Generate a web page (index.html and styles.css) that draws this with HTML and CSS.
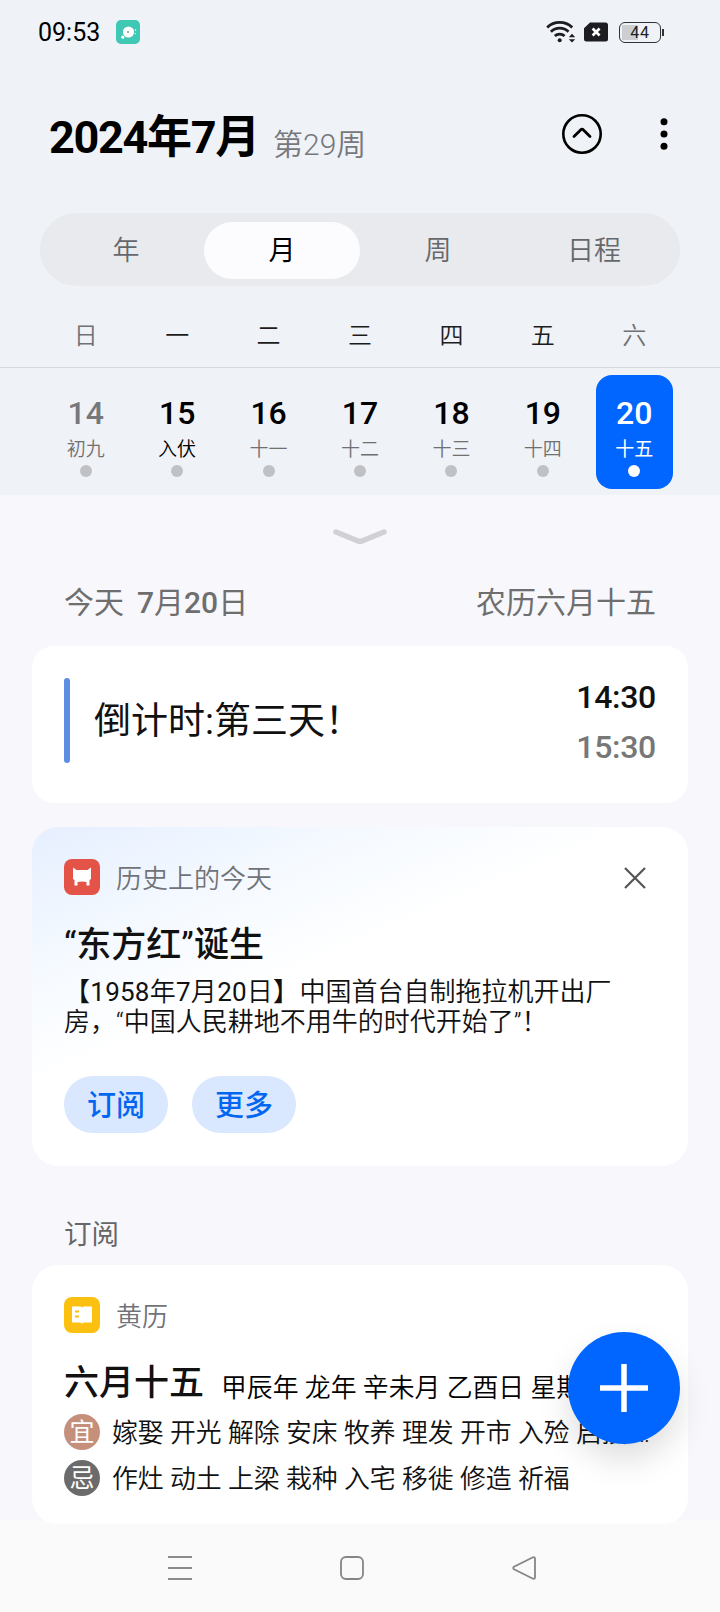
FILE: index.html
```html
<!DOCTYPE html>
<html lang="zh-CN">
<head>
<meta charset="utf-8">
<title>日历</title>
<link rel="stylesheet" href="styles.css">
</head>
<body>
<div class="screen">
  <header class="top">
    <div class="status">
      <span class="clock">09:53</span>
      <svg class="status-app" width="24" height="24" viewBox="0 0 24 24"><rect width="24" height="24" rx="5" fill="#3fc8b4"/><circle cx="12.5" cy="12" r="5.600" fill="#fff"/><circle cx="6.800" cy="17.200" r="1.600" fill="#fff"/><circle cx="19.500" cy="10" r=".8" fill="#fff"/><circle cx="19.300" cy="13.600" r=".6" fill="#fff"/><circle cx="12" cy="12" r="1.100" fill="#8aa9a0"/></svg>
      <div class="status-right">
        <svg width="30" height="24" viewBox="0 0 30 24" fill="none" stroke="#1d1c22" stroke-width="2.800"><path d="M1.200 7.400a18 18 0 0 1 25 0"/><path d="M4.900 11.800a12.600 12.600 0 0 1 17.600 0"/><path d="M8.800 16a7.200 7.200 0 0 1 9.800 0"/><circle cx="13.700" cy="20.200" r="2" fill="#1d1c22" stroke="none"/><path d="M22.800 17.200l3.200-3.400 3.200 3.400zM22.800 19.200l3.200 3.400 3.200-3.400z" fill="#1d1c22" stroke="none"/></svg>
        <svg class="sim" width="24" height="20" viewBox="0 0 24 20"><path d="M6 .5H21.500a2.500 2.500 0 0 1 2.500 2.500V17a2.500 2.500 0 0 1-2.500 2.500H2.500A2.500 2.500 0 0 1 0 17V6.200z" fill="#1d1c22"/><path d="M8.600 6.500l7 7M15.600 6.500l-7 7" stroke="#fff" stroke-width="2.600"/></svg>
        <div class="battery"><span>44</span></div><i class="battery-tip"></i>
      </div>
    </div>
    <div class="title-row">
      <h1>2024年7月</h1><span class="week">第29周</span>
      <svg class="collapse" width="40" height="40" viewBox="0 0 40 40" fill="none" stroke="#000"><circle cx="20" cy="20" r="18.700" stroke-width="2.600"/><path d="M12 22.500l6.800-6.800q1.200-1 2.400 0l6.800 6.800" stroke-width="2.800" stroke-linecap="round"/></svg>
      <svg class="more" width="8" height="32" viewBox="0 0 8 32"><circle cx="4" cy="3.800" r="3.500"/><circle cx="4" cy="16" r="3.500"/><circle cx="4" cy="28.200" r="3.500"/></svg>
    </div>
    <nav class="tabs"><span>年</span><span class="on">月</span><span>周</span><span>日程</span></nav>
    <div class="weekdays"><span class="dim">日</span><span>一</span><span>二</span><span>三</span><span>四</span><span>五</span><span class="dim">六</span></div>
    <div class="days">
      <div class="day dim"><b>14</b><span>初九</span><i></i></div>
      <div class="day term"><b>15</b><span>入伏</span><i></i></div>
      <div class="day"><b>16</b><span>十一</span><i></i></div>
      <div class="day"><b>17</b><span>十二</span><i></i></div>
      <div class="day"><b>18</b><span>十三</span><i></i></div>
      <div class="day"><b>19</b><span>十四</span><i></i></div>
      <div class="day sel"><b>20</b><span>十五</span><i></i></div>
    </div>
  </header>

  <main class="content">
    <svg class="handle" width="56" height="51" viewBox="0 0 56 51"><path d="M4 37L26 46q2 .7 4 0L52 37" fill="none" stroke="#d0d0d5" stroke-width="5.500" stroke-linecap="round"/></svg>
    <div class="date-row"><span>今天</span><span><b>7</b>月<b>20</b>日</span><span class="lunar">农历六月十五</span></div>

    <section class="card event">
      <i class="bar"></i>
      <h2>倒计时:第三天！</h2>
      <div class="times"><span>14:30</span><span class="end">15:30</span></div>
    </section>

    <section class="card history">
      <div class="card-head">
        <svg width="36" height="36" viewBox="0 0 36 36"><rect width="36" height="36" rx="8" fill="#e45348"/><path d="M9 8.500l3.500 2.500h11L27 8.500v11.500l-1.500 1v5.500h-3V23q-4.500-1.200-9 0v3.500h-3V21L9 20z" fill="#fff"/></svg>
        <span>历史上的今天</span>
        <svg class="close" width="24" height="24" viewBox="0 0 24 24"><path d="M2 3l20 20M22 3L2 23" stroke="#555" stroke-width="2.200"/></svg>
      </div>
      <h2>“东方红”诞生</h2>
      <p><span class="stamp">【<b>1958</b>年<b>7</b>月<b>20</b>日】</span>中国首台自制拖拉机开出厂<br>房，“中国人民耕地不用牛的时代开始了”！</p>
      <div class="buttons"><span>订阅</span><span>更多</span></div>
    </section>

    <div class="section-title">订阅</div>

    <section class="card almanac">
      <div class="card-head">
        <svg width="36" height="36" viewBox="0 0 36 36"><rect width="36" height="36" rx="8" fill="#fcc011"/><path d="M8 9.500h7.500q1.800 0 2.500.9.700-.9 2.500-.9H28v16h-7q-2 0-3 1-1-1-3-1H8z" fill="#fff"/><path d="M11 14.500h4M11 19.500h4" stroke="#fcc011" stroke-width="2"/></svg>
        <span>黄历</span>
      </div>
      <div class="lunar-row"><h2>六月十五</h2><span>甲辰年 龙年 辛未月 乙酉日 星期六</span></div>
      <div class="advice"><i class="good">宜</i><span>嫁娶 开光 解除 安床 牧养 理发 开市 入殓 启攒</span><span class="dots">…</span></div>
      <div class="advice"><i class="bad">忌</i><span>作灶 动土 上梁 栽种 入宅 移徙 修造 祈福</span></div>
    </section>
  </main>

  <div class="fab"><svg width="48" height="48" viewBox="0 0 48 48"><path d="M24 0v48M0 24h48" stroke="#fff" stroke-width="5.500"/></svg></div>

  <footer class="navbar">
    <svg width="24" height="26" viewBox="0 0 24 26"><path d="M0 2h24M0 13h24M0 24h24" stroke="#8b8b8b" stroke-width="2"/></svg>
    <svg width="24" height="26" viewBox="0 0 24 26"><rect x="1" y="2" width="22" height="22" rx="5" fill="none" stroke="#858585" stroke-width="1.800"/></svg>
    <svg width="24" height="26" viewBox="0 0 24 26"><path d="M21 2.300L2 11.800q-1.600 1.200 0 2.400l19 9.500q2 .5 2-1.500V3.800q0-2-2-1.500z" fill="none" stroke="#858585" stroke-width="1.800"/></svg>
  </footer>
</div>
</body>
</html>
```
FILE: styles.css
```css
* { box-sizing: border-box; margin: 0; padding: 0; }
body {
  width: 720px;
  background: #f7f7fc;
  font-family: Roboto, "Noto Sans CJK SC", sans-serif;
  color: #111;
  text-spacing-trim: space-all;
  font-weight: 400;
}
i { font-style: normal; display: block; }
svg { display: block; flex: none; }
.screen { position: relative; width: 720px; height: 1612px; overflow: hidden; }

.top { height: 495px; background: #eff2f6; }
.status { display: flex; height: 64px; padding: 0 55px 0 38px; align-items: center; }
.clock { font-size: 25px; line-height: 28px; width: 78px; padding-top: 2px; color: #000; }
.status-right { display: flex; align-items: center; margin-left: auto; }
.sim { margin: 0 11px 0 8px; }
.battery {
  width: 42px; height: 21px; border: 1.5px solid #333; border-radius: 6px;
  background: linear-gradient(90deg, #ccced1 0 16px, transparent 16px) 2px 2px / 36px 15px no-repeat;
  text-align: center; font-size: 16px; line-height: 19px; color: #222; letter-spacing: .8px;
}
.battery-tip { width: 2px; height: 7px; background: #333; margin: 0 1px; }

.title-row { display: flex; height: 149px; padding: 46px 52px 0 49px; }
h1 { font-size: 45px; line-height: 56px; font-weight: 700; color: #000; letter-spacing: -1.3px; }
.week { font-size: 30px; line-height: 40px; padding-top: 15px; margin-left: 14px; color: #77787c; font-weight: 350; }
.collapse { margin: 4px 0 0 auto; }
.more { margin: 8px 0 0 58px; }

.tabs { display: flex; margin: 0 40px; height: 73px; padding: 9px 8px 7px; background: #e8eaed; border-radius: 37px; }
.tabs span { flex: 1; font-size: 27px; line-height: 59px; height: 57px; text-align: center; color: #66676b; font-weight: 350; border-radius: 29px; }
.tabs .on { background: #fcfcfe; color: #000; font-weight: 400; }

.weekdays { display: grid; grid-template-columns: repeat(7, 1fr); height: 82px; padding: 33px 40px 0; border-bottom: 1.5px solid #d5d8dc; }
.weekdays span { font-size: 24px; line-height: 34px; text-align: center; font-weight: 350; color: #1c1c20; }
.weekdays .dim { color: #707175; }

.days { display: grid; grid-template-columns: repeat(7, 1fr); padding: 7px 40px 0; }
.day { display: flex; flex-direction: column; align-items: center; height: 114px; width: 77px; margin: 0 auto; padding-top: 20px; border-radius: 16px; color: #000; }
.day b { font-size: 32px; line-height: 36px; font-weight: 500; }
.day span { font-size: 19px; line-height: 26px; margin-top: 6px; color: #6f7074; font-weight: 350; }
.day i { width: 12px; height: 12px; border-radius: 6px; background: #bfc1c4; margin-top: 2px; }
.day.dim b { color: #77787c; }
.day.term span { color: #000; }
.day.sel { background: #0066ff; color: #fff; }
.day.sel span { color: #fff; font-weight: 400; }
.day.sel i { background: #fff; }

.content { position: relative; z-index: 1; height: 1025px; }
.handle { margin: 0 auto; }
.date-row { display: flex; padding: 37px 64px 0; font-size: 30px; line-height: 40px; color: #6e6e6e; font-weight: 400; height: 100px; }
.date-row b { font-weight: 500; }
.date-row span + span { margin-left: 13px; }
.date-row .lunar { margin-left: auto; }

.card { margin: 0 32px; background: #fff; border-radius: 26px; }
h2 { font-weight: 450; }
.event { display: flex; height: 157px; padding: 32px 32px 0; border-radius: 22px; }
.bar { width: 6px; height: 85px; border-radius: 3px; background: #5c8ee2; }
.event h2 { font-size: 37px; line-height: 50px; margin: 19px 0 0 24px; font-weight: 400; }
.times { margin-left: auto; display: flex; flex-direction: column; font-size: 32px; line-height: 50px; font-weight: 500; margin-top: -6px; letter-spacing: -.3px; }
.times .end { color: #777; }

.history {
  margin-top: 24px; height: 339px; padding: 32px;
  background: linear-gradient(157deg, #e6efff 0, #f4f9ff 22%, #fff 42%);
}
.card-head { display: flex; align-items: center; height: 36px; font-size: 26px; color: #717378; font-weight: 350; }
.card-head span { margin-left: 16px; line-height: 36px; padding-top: 4px; }
.close { margin-left: auto; margin-right: 9px; }
.history h2 { font-size: 35px; line-height: 48px; margin-top: 27px; }
.history p { font-size: 26px; line-height: 30px; margin-top: 7px; font-weight: 350; white-space: nowrap; }
.stamp { letter-spacing: .25px; }
.stamp b { font-weight: 400; }
.buttons { display: flex; gap: 24px; margin-top: 39px; }
.buttons span { width: 104px; height: 57px; border-radius: 29px; background: #d9e7ff; color: #0366f0; font-size: 29px; line-height: 61px; text-align: center; font-weight: 450; }

.section-title { padding: 49px 64px 0; height: 99px; font-size: 27.5px; line-height: 40px; color: #666; }

.almanac { height: 259px; padding: 32px 0 0 32px; overflow: hidden; }
.lunar-row { display: flex; height: 81px; white-space: nowrap; }
.lunar-row h2 { font-size: 35px; line-height: 48px; padding-top: 27px; }
.lunar-row span { font-size: 25.85px; line-height: 36px; padding-top: 37px; margin-left: 17px; font-weight: 350; color: #000; }
.advice { display: flex; height: 46px; white-space: nowrap; font-size: 25.85px; line-height: 39px; font-weight: 350; }
.advice i { width: 36px; height: 36px; border-radius: 18px; color: #fff; font-size: 25px; line-height: 38px; text-align: center; font-weight: 400; margin-right: 12px; }
.advice .dots { margin-left: 6px; }
.good { background: #c4907c; }
.bad { background: #6b6b6b; }

.fab {
  position: absolute; z-index: 2; left: 568px; top: 1332px; width: 112px; height: 112px;
  border-radius: 56px; background: #0066ff; display: grid; place-items: center;
  box-shadow: 0 16px 32px rgba(0, 0, 0, .13);
}
.navbar { display: flex; gap: 148px; padding: 35px 0 0 168px; height: 92px; background: #fafafa; }
```
